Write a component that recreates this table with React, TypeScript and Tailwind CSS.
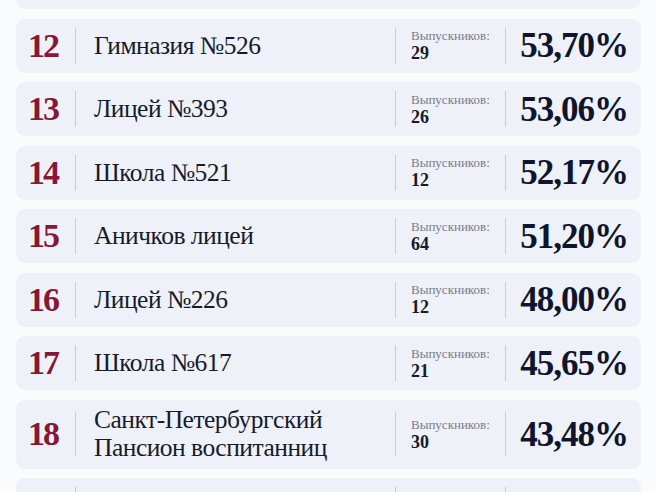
import React from 'react';

type Row = {
  rank: number;
  name: string[];
  grads: number;
  score: string;
};

const rows: Row[] = [
  { rank: 11, name: ['Лицей №590'], grads: 24, score: '54,17%' },
  { rank: 12, name: ['Гимназия №526'], grads: 29, score: '53,70%' },
  { rank: 13, name: ['Лицей №393'], grads: 26, score: '53,06%' },
  { rank: 14, name: ['Школа №521'], grads: 12, score: '52,17%' },
  { rank: 15, name: ['Аничков лицей'], grads: 64, score: '51,20%' },
  { rank: 16, name: ['Лицей №226'], grads: 12, score: '48,00%' },
  { rank: 17, name: ['Школа №617'], grads: 21, score: '45,65%' },
  { rank: 18, name: ['Санкт-Петербургский', 'Пансион воспитанниц'], grads: 30, score: '43,48%' },
  { rank: 19, name: ['Гимназия №171'], grads: 14, score: '42,86%' },
];

function RankCard({ rank, name, grads, score }: Row) {
  const tall = name.length > 1;
  const rule = tall ? 'h-[44px]' : 'h-[36px]';

  return (
    <div
      className={`flex items-center shrink-0 rounded-[9px] bg-[#eef2f8] ${
        tall ? 'h-[69px]' : 'h-[54px]'
      }`}
    >
      <div className="w-[59px] shrink-0 pl-[12px] text-[34px] font-bold leading-none tracking-[-2px] text-[#861737]">
        {rank}
      </div>
      <div className={`w-px shrink-0 ${rule} bg-[#c8ccd5]`} />
      <div className="w-[319px] shrink-0 whitespace-nowrap pl-[18px] text-[25.5px] leading-[28px] tracking-[-0.5px] text-[#161a2c]">
        {name.map((line) => (
          <div key={line}>{line}</div>
        ))}
      </div>
      <div className={`w-px shrink-0 ${rule} bg-[#c8ccd5]`} />
      <div className="w-[109px] shrink-0 pl-[15px] flex flex-col">
        <span className="text-[13px] leading-[15px] text-[#777c8c]">Выпускников:</span>
        <span className="text-[18px] font-bold leading-[20px] text-[#161a2c]">{grads}</span>
      </div>
      <div className={`w-px shrink-0 ${rule} bg-[#c8ccd5]`} />
      <div className="flex-1 pr-[13px] text-right text-[35px] font-bold leading-none tracking-[-1px] text-[#10152f]">
        {score}
      </div>
    </div>
  );
}

export default function App() {
  return (
    <div
      className="h-[492px] w-[656px] overflow-hidden bg-[#fafbfd]"
      style={{ fontFamily: '"Liberation Serif", "DejaVu Serif", serif' }}
    >
      <div className="mt-[-45px] flex flex-col gap-[9.5px] pl-[16px] pr-[15px]">
        {rows.map((r) => (
          <RankCard key={r.rank} {...r} />
        ))}
      </div>
    </div>
  );
}
